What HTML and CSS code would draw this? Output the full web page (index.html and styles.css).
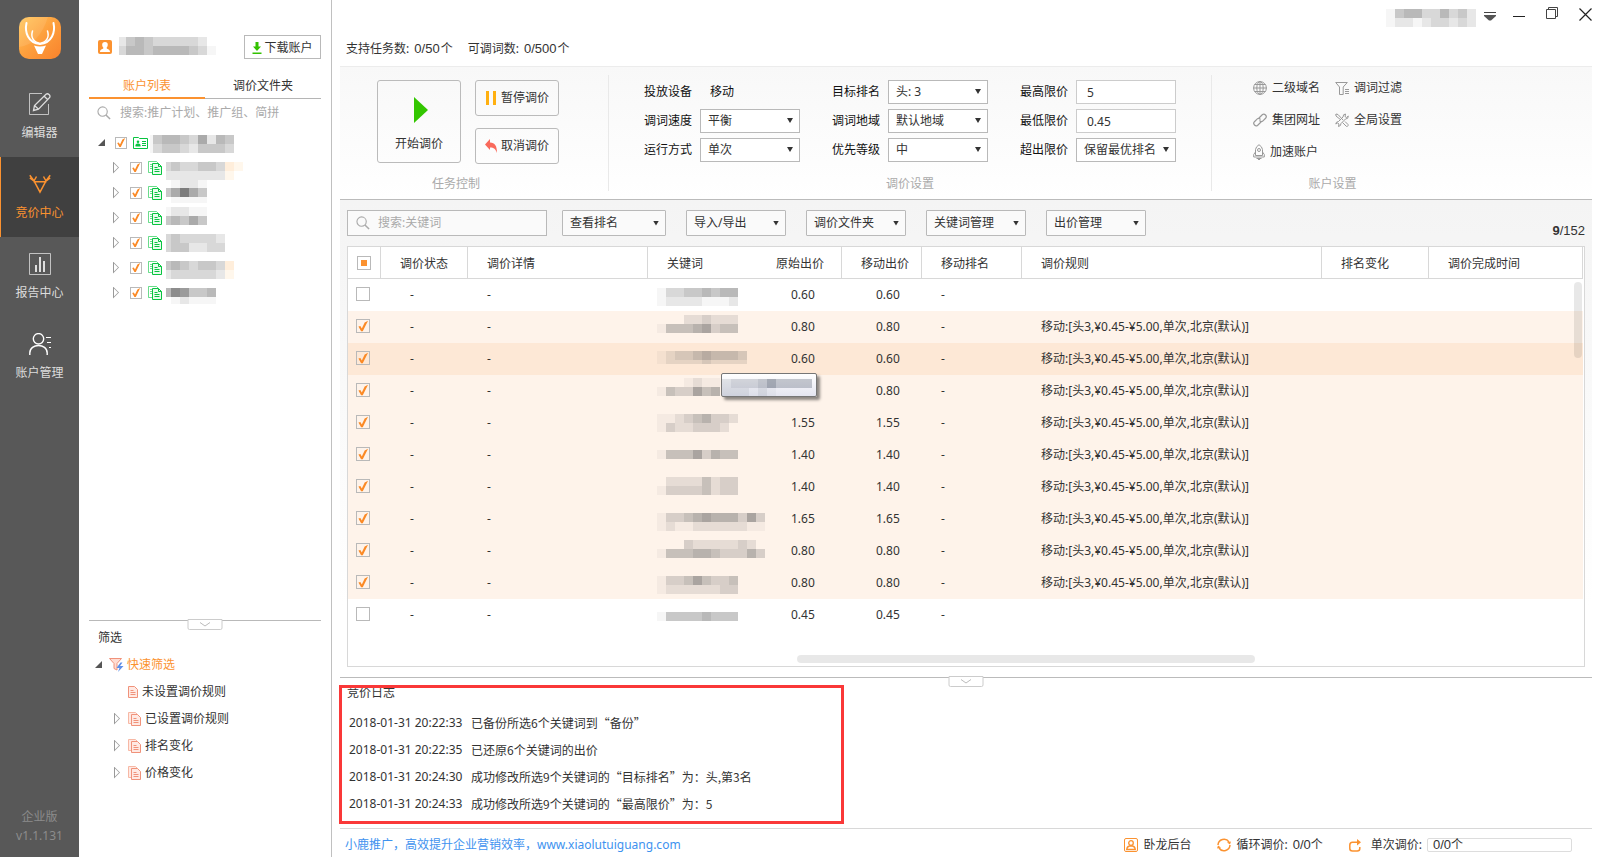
FILE: index.html
```html
<!DOCTYPE html>
<html lang="zh-CN">
<head>
<meta charset="utf-8">
<title>小鹿推广 - 竞价中心</title>
<link rel="stylesheet" href="styles.css">
</head>
<body>
<svg class="defs" aria-hidden="true">
  <symbol id="i-search" viewBox="0 0 15 15"><circle cx="6" cy="6" r="5" fill="none" stroke="currentColor" stroke-width="1.2"/><path d="M9.6 9.6 14 14" stroke="currentColor" stroke-width="1.6"/></symbol>
  <symbol id="i-docs" viewBox="0 0 15 14"><path d="M4 11.500H.5V.5h8l1.500 1.500" fill="none" stroke="currentColor" opacity=".6"/><path d="M2 3.500h2M2 5.500h2M2 7.500h2" stroke="currentColor" opacity=".6"/><path d="M4.500 2.500h6l3 3v8h-9z" fill="#e9fbee" stroke="currentColor"/><path d="M10.500 2.500v3h3M6.500 6.500h3M6.500 8.500h5M6.500 10.500h5" fill="none" stroke="currentColor"/></symbol>
  <symbol id="i-rules" viewBox="0 0 14 14"><path d="M3 11.500H.5V.5h7l2 2" fill="#ffe9e3" stroke="#f7b8a5"/><path d="M3.500 2.500h6l3 3v8h-9z" fill="#ffe9e3" stroke="#f0927a"/><path d="M5.500 6.500h3M5.500 8.500h5M5.500 10.500h5" stroke="#f0927a"/></symbol>
  <symbol id="i-down" viewBox="0 0 11 6"><path d="M.5.5l5 3.500 5-3.500" fill="none" stroke="#bbb"/></symbol>
</svg>

<div class="app">
  <aside class="rail">
    <svg class="logo" viewBox="0 0 42 42" role="img" aria-label="小鹿推广">
      <defs><linearGradient id="lg" x1="0" y1="0" x2="1" y2="1"><stop offset="0" stop-color="#ffc75a"/><stop offset=".5" stop-color="#fd9f3d"/><stop offset="1" stop-color="#f9822c"/></linearGradient></defs>
      <rect width="42" height="42" rx="10" fill="url(#lg)"/>
      <path d="M0 30Q20 28 29 0H10Q0 0 0 10z" fill="#fff" opacity=".1"/>
      <path d="M7.500 6C5.500 15 9 26 21 27 33 26 36.500 15 34.500 6" fill="none" stroke="#fff" stroke-width="2" stroke-linecap="round"/>
      <path d="M13.500 14C11.500 20 14 25 21 26.500 28 25 30.500 20 28.500 14" fill="none" stroke="#fff" stroke-width="1.500" stroke-linecap="round"/>
      <path d="M15 28.500Q21 30.500 27 28.500L23 37H19z" fill="#fff"/>
    </svg>
    <nav class="rail-nav">
      <a class="rail-item" href="#editor">
        <svg class="rail-icon" viewBox="0 0 22 22" fill="none" stroke="currentColor"><path d="M13 .5H.5v21h19V11" opacity=".8"/><path d="M4.500 17.500l1-5L17 1.200q1.500-1 3 .3t.7 3L9.500 16.200zM15 3l4 4M5.500 12.500l4 3.700" stroke-width="1.300"/></svg>
        编辑器</a>
      <a class="rail-item is-active" href="#bid" aria-current="page">
        <svg class="rail-icon" viewBox="0 0 22 22" fill="none" stroke="currentColor" stroke-width="1.500"><path d="M.8 2.200L5 8l6 11.200L17 8l4.200-5.800M4.500 8.800h13M7.500 3.500L5 8M14.500 3.500L17 8M.8 5l4 2.800M21.200 5l-4 2.800"/></svg>
        竞价中心</a>
      <a class="rail-item" href="#report">
        <svg class="rail-icon" viewBox="0 0 22 22" fill="none" stroke="currentColor"><path d="M.5.5h21v21H.5z" opacity=".8"/><path d="M7 12v7M11 4v15M15 8v11" stroke-width="2"/></svg>
        报告中心</a>
      <a class="rail-item" href="#account">
        <svg class="rail-icon" viewBox="0 0 22 22" fill="none" stroke="#fff"><circle cx="9.500" cy="5.800" r="5.200" stroke-width="1.400"/><path d="M.8 22V20C.8 10 18.200 10 18.200 20v2" stroke-width="1.400"/><path d="M17 4.500h5M18 9.500h4M20 14.500h2"/></svg>
        账户管理</a>
    </nav>
    <p class="version">企业版<br>v1.1.131</p>
  </aside>

  <section class="side">
    <header class="side-head">
      <svg width="14" height="14" viewBox="0 0 14 14"><rect width="14" height="14" rx="2" fill="#fb9230"/><path d="M7 2c4 0 3 4.500 1.500 6 .2 1 3.500 1 3.500 4H2c0-3 3.300-3 3.500-4C4 6.500 3 2 7 2z" fill="#fff"/></svg>
      <svg class="mosaic mosaic-name" width="98" height="20" data-top="0" data-lead="7" data-cells="1343222221|24434444320"></svg>
      <button class="download" type="button"><svg width="10" height="12" viewBox="0 0 10 12"><path d="M3.500 0h3v4.500H9L5 9 1 4.500h2.500zM.5 10.500h9V12h-9z" fill="#33c200"/></svg>下载账户</button>
    </header>
    <div class="tabs" role="tablist">
      <button class="tab is-active" type="button" role="tab" aria-selected="true">账户列表</button>
      <button class="tab" type="button" role="tab" aria-selected="false">调价文件夹</button>
    </div>
    <label class="side-search">
      <svg width="14" height="14"><use href="#i-search"/></svg>
      <input type="search" placeholder="搜索:推广计划、推广组、简拼" aria-label="搜索">
    </label>
    <ul class="tree">
      <li class="node root"><i class="open"></i><input class="check sm" type="checkbox" checked aria-label="账户">
        <svg class="green" width="15" height="12" viewBox="0 0 15 12" fill="none" stroke="currentColor"><path d="M.5 11.500V.5h5l1 1h8v10z"/><circle cx="5" cy="4.800" r="1.300" fill="currentColor" stroke="none"/><path d="M2.500 9.500V8.200C2.500 6 7.500 6 7.500 8.200v1.300z" fill="currentColor" stroke="none"/><path d="M9 4.500h4M9 6.500h4M9 8.500h4"/></svg>
        <svg class="mosaic" width="84" height="25" data-top="5" data-lead="3" data-cells="0344325143|0233213332"></svg></li>
      <li class="node"><i class="closed"></i><input class="check sm" type="checkbox" checked aria-label="推广计划1"><svg class="green" width="15" height="14"><use href="#i-docs"/></svg><svg class="mosaic" width="80" height="25" data-top="7" data-lead="5" data-cells="2322332pq|1111111q"></svg></li>
      <li class="node"><i class="closed"></i><input class="check sm" type="checkbox" checked aria-label="推广计划2"><svg class="green" width="15" height="14"><use href="#i-docs"/></svg><svg class="mosaic" width="80" height="25" data-top="-1" data-lead="5" data-bottom="23" data-cells=" 0110|35853| 0000"></svg></li>
      <li class="node"><i class="closed"></i><input class="check sm" type="checkbox" checked aria-label="推广计划3"><svg class="green" width="15" height="14"><use href="#i-docs"/></svg><svg class="mosaic" width="80" height="25" data-top="2" data-lead="5" data-cells="01100|34353"></svg></li>
      <li class="node"><i class="closed"></i><input class="check sm" type="checkbox" checked aria-label="推广计划4"><svg class="green" width="15" height="14"><use href="#i-docs"/></svg><svg class="mosaic" width="80" height="25" data-top="4" data-lead="5" data-cells="2322221|2331122"></svg></li>
      <li class="node"><i class="closed"></i><input class="check sm" type="checkbox" checked aria-label="推广计划5"><svg class="green" width="15" height="14"><use href="#i-docs"/></svg><svg class="mosaic" width="80" height="25" data-top="6" data-lead="5" data-cells="3432332p|1222221q"></svg></li>
      <li class="node"><i class="closed"></i><input class="check sm" type="checkbox" checked aria-label="推广计划6"><svg class="green" width="15" height="14"><use href="#i-docs"/></svg><svg class="mosaic" width="80" height="25" data-top="8" data-lead="5" data-bottom="24" data-cells="476334| 01000"></svg></li>
    </ul>
    <section class="filter">
      <button class="handle" type="button" aria-label="收起筛选"><svg width="11" height="6"><use href="#i-down"/></svg></button>
      <h2>筛选</h2>
      <ul>
        <li class="f-root"><i class="open"></i><svg width="15" height="14" viewBox="0 0 15 14"><path d="M.5.5h12L8 5.500V12l-3-1.500v-5z" fill="#ffddd3" stroke="#f0927a"/><path d="M11.500 4.500L7.500 10h3L9 14l5.500-6H11l2.500-3.500z" fill="#5c8fe8"/></svg><span>快速筛选</span></li>
        <li class="f-leaf"><svg width="10" height="12" viewBox="0 0 10 12"><path d="M.5.5h6l3 3v8h-9z" fill="#ffe9e3" stroke="#f0927a"/><path d="M2.500 4.500h3M2.500 6.500h5M2.500 8.500h5" stroke="#f0927a"/></svg>未设置调价规则</li>
        <li class="f-item"><i class="closed"></i><svg width="14" height="14"><use href="#i-rules"/></svg>已设置调价规则</li>
        <li class="f-item"><i class="closed"></i><svg width="14" height="14"><use href="#i-rules"/></svg>排名变化</li>
        <li class="f-item"><i class="closed"></i><svg width="14" height="14"><use href="#i-rules"/></svg>价格变化</li>
      </ul>
    </section>
  </section>

  <main class="main">
    <header class="top">
      <p class="quota"><span>支持任务数: <b class="num">0/50</b>个</span><span>可调词数: <b class="num">0/500</b>个</span></p>
      <div class="window">
        <svg class="mosaic" width="90" height="20" data-top="2" data-cells="0344224231|0110122121"></svg>
        <button type="button" aria-label="菜单"><svg width="12" height="12" viewBox="0 0 12 12"><path d="M0 1.500h12" stroke="#444"/><path d="M0 4h12v1L7 9.500H5L0 5z" fill="#555"/></svg></button>
        <button type="button" aria-label="最小化"><svg width="12" height="12" viewBox="0 0 12 12"><path d="M0 5.500h12" stroke="#222"/></svg></button>
        <button type="button" aria-label="还原"><svg width="12" height="20" viewBox="0 0 12 20"><path d="M.5 2.500h9v9h-9zM2.500 2.500v-2h9v9h-2" fill="none" stroke="#444"/></svg></button>
        <button type="button" aria-label="关闭"><svg width="13" height="18" viewBox="0 0 13 18"><path d="M.5.500l12 12M12.500.500l-12 12" stroke="#222" stroke-width="1.200"/></svg></button>
      </div>
    </header>

    <section class="ribbon">
      <div class="group group-task">
        <div class="task">
          <button class="start" type="button"><svg width="18" height="26" viewBox="-4 0 18 26"><path d="M0 0l14 13L0 26z" fill="#33c600"/></svg>开始调价</button>
          <div class="task-side">
            <button type="button"><svg width="12" height="14" viewBox="0 0 12 14"><path d="M1 0h3v14H1zM8 0h3v14H8z" fill="#ffb010"/></svg>暂停调价</button>
            <button type="button"><svg width="12" height="14" viewBox="0 0 12 14"><path d="M0 5.500L5 0v3.500C10 3.500 12 7 12 14 10.500 10 9 8.500 5 8.500V11z" fill="#f96a5c"/></svg>取消调价</button>
          </div>
        </div>
        <h3>任务控制</h3>
      </div>
      <div class="group group-price">
        <div class="fields">
          <p class="field"><span>投放设备</span><span class="fixed">移动</span></p>
          <label class="field"><span>目标排名</span><span class="pick"><select><option>头: 3</option></select></span></label>
          <label class="field"><span>最高限价</span><input type="text" value="5"></label>
          <label class="field"><span>调词速度</span><span class="pick"><select><option>平衡</option></select></span></label>
          <label class="field"><span>调词地域</span><span class="pick"><select><option>默认地域</option></select></span></label>
          <label class="field"><span>最低限价</span><input type="text" value="0.45"></label>
          <label class="field"><span>运行方式</span><span class="pick"><select><option>单次</option></select></span></label>
          <label class="field"><span>优先等级</span><span class="pick"><select><option>中</option></select></span></label>
          <label class="field"><span>超出限价</span><span class="pick"><select><option>保留最优排名</option></select></span></label>
        </div>
        <h3>调价设置</h3>
      </div>
      <div class="group group-account">
        <div class="links">
          <button type="button"><svg width="14" height="14" viewBox="0 0 14 14" fill="none" stroke="#999"><circle cx="7" cy="7" r="6.400"/><ellipse cx="7" cy="7" rx="3.200" ry="6.400"/><path d="M7 .5v13M.5 7h13M1.500 3.500h11M1.500 10.500h11"/></svg>二级域名</button>
          <button type="button"><svg width="14" height="14" viewBox="0 0 14 14" fill="none" stroke="#999"><path d="M.7 1.500h11.600L8.200 6v7.500H4.500V6zM10 8.500h4M10 10.500h4M10 12.500h4"/></svg>调词过滤</button>
          <button type="button"><svg width="14" height="14" viewBox="0 0 14 14" fill="none" stroke="#999" stroke-width="1.200"><path d="M6 5l3.500-3.500q1.500-1 3 .5t.3 3L9.500 8.300Q8 9 6.500 7.500M8 9l-3.500 3.500q-1.500 1-3-.5t-.3-3L4.500 5.700Q6 5 7.500 6.500"/></svg>集团网址</button>
          <button type="button"><svg width="14" height="14" viewBox="0 0 14 14" fill="none" stroke="#999"><path d="M1 1l2 .5L8 7M10 8.500l3 3q.5 1-.5 1.800-1 .5-1.500-.3L7.500 9.500M13.300 3L11.500 4.500 10 3.500 10.500 1Q8 1 8 4L3.500 8.500Q.8 8.800.8 11l1.700-1 1.500 1-.5 2.500Q6 13 6 10.500L10.500 6Q13.500 6 13.300 3zM.8 1L1 3l5 4"/></svg>全局设置</button>
          <button class="tight" type="button"><svg width="12" height="16" viewBox="0 0 12 16" fill="none" stroke="#999"><path d="M2.500 11.500V5.500Q3 2.500 6 .7 9 2.500 9.500 5.500v6zM2.500 8L.7 10.500V13h10.600V10.500L9.500 8"/><circle cx="6" cy="6" r="1.500"/><path d="M3.500 14.500h5M5 15.500h2"/></svg>加速账户</button>
        </div>
        <h3>账户设置</h3>
      </div>
    </section>

    <section class="work">
      <div class="bar">
        <label class="search"><svg width="14" height="14"><use href="#i-search"/></svg><input type="search" placeholder="搜索:关键词" aria-label="搜索关键词"></label>
        <div class="menus">
          <button class="menu wide" type="button">查看排名</button>
          <button class="menu" type="button">导入/导出</button>
          <button class="menu" type="button">调价文件夹</button>
          <button class="menu" type="button">关键词管理</button>
          <button class="menu" type="button">出价管理</button>
        </div>
        <p class="count"><b>9</b>/152</p>
      </div>
      <div class="sheet">
        <table>
          <colgroup><col class="w-check"><col class="w-state"><col class="w-detail"><col class="w-word"><col class="w-orig"><col class="w-mobile"><col class="w-rank"><col class="w-rule"><col class="w-change"><col></colgroup>
          <thead>
            <tr><th><input class="check some" type="checkbox" aria-label="全选"></th><th>调价状态</th><th>调价详情</th><th class="open-end">关键词</th><th>原始出价</th><th>移动出价</th><th>移动排名</th><th>调价规则</th><th>排名变化</th><th>调价完成时间</th></tr>
          </thead>
          <tbody>
            <tr><td><input class="check" type="checkbox" aria-label="选择"></td><td>-</td><td>-</td><td><svg class="mosaic" width="109" height="32" data-top="9" data-cells="022334344|011110001"></svg></td><td>0.60</td><td>0.60</td><td>-</td><td></td><td></td><td></td></tr>
            <tr class="on"><td><input class="check" type="checkbox" checked aria-label="选择"></td><td>-</td><td>-</td><td><svg class="mosaic" width="109" height="32" data-top="4" data-cells="   112111|033345233"></svg></td><td>0.80</td><td>0.80</td><td>-</td><td>移动:[头3,¥0.45-¥5.00,单次,北京(默认)]</td><td></td><td></td></tr>
            <tr class="on hover"><td><input class="check" type="checkbox" checked aria-label="选择"></td><td>-</td><td>-</td><td><svg class="mosaic" width="109" height="32" data-top="8" data-bottom="21" data-cells="0122343332|0111121111"></svg></td><td>0.60</td><td>0.60</td><td>-</td><td>移动:[头3,¥0.45-¥5.00,单次,北京(默认)]</td><td></td><td></td></tr>
            <tr class="on"><td><input class="check" type="checkbox" checked aria-label="选择"></td><td>-</td><td>-</td><td><svg class="mosaic" width="109" height="32" data-top="3" data-cells="   0100|0322534"></svg></td><td></td><td>0.80</td><td>-</td><td>移动:[头3,¥0.45-¥5.00,单次,北京(默认)]</td><td></td><td></td></tr>
            <tr class="on"><td><input class="check" type="checkbox" checked aria-label="选择"></td><td>-</td><td>-</td><td><svg class="mosaic" width="109" height="32" data-top="7" data-cells="001234221|02112221"></svg></td><td>1.55</td><td>1.55</td><td>-</td><td>移动:[头3,¥0.45-¥5.00,单次,北京(默认)]</td><td></td><td></td></tr>
            <tr class="on"><td><input class="check" type="checkbox" checked aria-label="选择"></td><td>-</td><td>-</td><td><svg class="mosaic" width="109" height="32" data-top="11" data-cells="033352433"></svg></td><td>1.40</td><td>1.40</td><td>-</td><td>移动:[头3,¥0.45-¥5.00,单次,北京(默认)]</td><td></td><td></td></tr>
            <tr class="on"><td><input class="check" type="checkbox" checked aria-label="选择"></td><td>-</td><td>-</td><td><svg class="mosaic" width="109" height="32" data-top="6" data-cells=" 11113122|022223122"></svg></td><td>1.40</td><td>1.40</td><td>-</td><td>移动:[头3,¥0.45-¥5.00,单次,北京(默认)]</td><td></td><td></td></tr>
            <tr class="on"><td><input class="check" type="checkbox" checked aria-label="选择"></td><td>-</td><td>-</td><td><svg class="mosaic" width="109" height="32" data-top="10" data-cells="022345444252|010011111100"></svg></td><td>1.65</td><td>1.65</td><td>-</td><td>移动:[头3,¥0.45-¥5.00,单次,北京(默认)]</td><td></td><td></td></tr>
            <tr class="on"><td><input class="check" type="checkbox" checked aria-label="选择"></td><td>-</td><td>-</td><td><svg class="mosaic" width="109" height="32" data-top="5" data-cells="   21111121|033344322242"></svg></td><td>0.80</td><td>0.80</td><td>-</td><td>移动:[头3,¥0.45-¥5.00,单次,北京(默认)]</td><td></td><td></td></tr>
            <tr class="on"><td><input class="check" type="checkbox" checked aria-label="选择"></td><td>-</td><td>-</td><td><svg class="mosaic" width="109" height="32" data-top="9" data-cells="022353223|011111122"></svg></td><td>0.80</td><td>0.80</td><td>-</td><td>移动:[头3,¥0.45-¥5.00,单次,北京(默认)]</td><td></td><td></td></tr>
            <tr><td><input class="check" type="checkbox" aria-label="选择"></td><td>-</td><td>-</td><td><svg class="mosaic" width="109" height="32" data-top="13" data-cells="033334333"></svg></td><td>0.45</td><td>0.45</td><td>-</td><td></td><td></td><td></td></tr>
          </tbody>
        </table>
        <div class="tip"><svg class="mosaic cool" width="90" height="24" data-top="5" data-cells="1222353333|111010"></svg></div>
        <div class="thumb-y"></div>
        <div class="thumb-x"></div>
      </div>
    </section>

    <section class="log">
      <button class="handle" type="button" aria-label="收起日志"><svg width="11" height="6"><use href="#i-down"/></svg></button>
      <h2>竞价日志</h2>
      <ol>
        <li><time>2018-01-31 20:22:33</time><span>已备份所选6个关键词到“备份”</span></li>
        <li><time>2018-01-31 20:22:35</time><span>已还原6个关键词的出价</span></li>
        <li><time>2018-01-31 20:24:30</time><span>成功修改所选9个关键词的“目标排名”为：头,第3名</span></li>
        <li><time>2018-01-31 20:24:33</time><span>成功修改所选9个关键词的“最高限价”为：5</span></li>
      </ol>
      <div class="callout"></div>
    </section>

    <footer class="foot">
      <a href="#home">小鹿推广，高效提升企业营销效率，www.xiaolutuiguang.com</a>
      <button class="admin" type="button"><svg width="14" height="14" viewBox="0 0 14 14" fill="none" stroke="#fb9230"><rect x=".5" y=".5" width="13" height="13" rx="1.500"/><circle cx="7" cy="5" r="2.300" stroke-width="1.300"/><path d="M2.700 11.500Q3 8.500 5.500 8h3q2.500.5 2.800 3.500z" stroke-width="1.300"/></svg>卧龙后台</button>
      <p class="loop"><svg width="14" height="14" viewBox="0 0 14 14" fill="none" stroke="#fb9230" stroke-width="1.500"><path d="M1 7A6 6 0 0 1 12 4M13 7A6 6 0 0 1 2 10"/><path d="M14 3.500l-1 3-3-2zM0 10.500l1-3 3 2z" fill="#fb9230" stroke="none"/></svg>循环调价: <span><b class="num">0/0</b>个</span></p>
      <p class="once"><svg width="12" height="13" viewBox="0 0 12 13" fill="none" stroke="#fb9230" stroke-width="1.500"><path d="M9 3.200H3.500Q.8 3.200.8 6v3.500q0 2.500 2.700 2.500h4.800q2.500 0 2.500-2.500V8"/><path d="M8 0l4 3.200L8 6.500z" fill="#fb9230" stroke="none"/></svg>单次调价: <span class="progress"><b class="num">0/0</b>个</span></p>
    </footer>
  </main>
</div>
<script src="script.js"></script>
</body>
</html>
```
FILE: styles.css
```css
* { box-sizing: border-box; }
body { margin: 0; background: #fff; color: #333; font: 12px/16px "Noto Sans", "Noto Sans CJK SC", sans-serif; }
h2, h3, p, ul, ol { margin: 0; padding: 0; font-size: 12px; font-weight: 400; list-style: none; }
button, input, select { font: inherit; color: inherit; margin: 0; }
button { background: none; border: 0; padding: 0; white-space: nowrap; }
input:focus { outline: none; }
input::placeholder { color: #aaa; opacity: 1; }
a { color: inherit; text-decoration: none; }
svg { display: block; flex: none; }
.defs { position: absolute; width: 0; height: 0; }
.num { font: 13px/16px "Liberation Sans", sans-serif; }
.green { color: #08c440; }

.app { display: grid; grid-template-columns: 79px 253px minmax(0, 1fr); min-height: 100vh; }

/* navigation rail */
.rail { background: #585858; color: #ddd; display: flex; flex-direction: column; align-items: center; padding: 17px 0 12px; }
.logo { width: 42px; height: 42px; }
.rail-nav { width: 100%; margin-top: 18px; }
.rail-item { display: flex; flex-direction: column; align-items: center; gap: 10px; height: 80px; padding-top: 16px; }
.rail-item.is-active { background: #404040; color: #fb9230; box-shadow: inset 1px 0 #fb9230; }
.rail-icon { width: 22px; height: 22px; }
.version { margin-top: auto; color: #8c8c8c; text-align: center; line-height: 19px; }

/* account panel */
.side { display: flex; flex-direction: column; padding: 35px 10px 0; border-right: 1px solid #c0c0c0; }
.side-head { display: flex; align-items: center; height: 24px; padding-left: 9px; }
.mosaic-name { margin: 0 auto 0 7px; }
.download { display: flex; align-items: center; justify-content: center; gap: 2px; width: 77px; height: 24px; padding-top: 1px; border: 1px solid #b9b9b9; }
.tabs { display: grid; grid-template-columns: 1fr 1fr; margin-top: 13px; height: 27px; }
.tab { padding-top: 2px; border-bottom: 1px solid #b5b5b5; }
.tab.is-active { color: #fb9230; border-bottom: 2px solid #fb9230; }
.side-search { display: flex; align-items: center; gap: 9px; height: 27px; padding-left: 8px; color: #aaa; }
.side-search input { flex: 1; min-width: 0; border: 0; padding: 0; background: none; }
.tree { margin-top: 4px; }
.node { display: flex; align-items: center; height: 25px; padding-left: 24px; }
.node.root { padding-left: 9px; }
.open { width: 7px; height: 7px; background: #555; clip-path: polygon(100% 0, 100% 100%, 0 100%); }
.closed { width: 6px; height: 12px; background: #999; clip-path: polygon(0 0, 100% 50%, 0 100%, 0 0, 1px 2px, 1px 10px, 5px 50%, 1px 2px); }
.node .check { margin: 0 6px 0 11px; }
.node.root .check { margin-left: 10px; }
.node .mosaic { margin-left: 3px; }
.node.root .mosaic { margin-left: 2px; }

.check { appearance: none; display: block; position: relative; flex: none; width: 14px; height: 14px; border: 1px solid #b9b9b9; background: transparent; }
.check.sm { width: 12px; height: 12px; }
.check:checked::before { content: ""; display: block; width: 100%; height: 100%; background: #fb8a26; clip-path: polygon(12% 54%, 28% 50%, 40% 70%, 64% 20%, 92% 6%, 48% 94%, 34% 94%); }
.check.some::before { content: ""; display: block; width: 6px; height: 6px; margin: 3px; background: #fb9230; }

.filter { position: relative; margin-top: auto; height: 237px; border-top: 1px solid #b9b9b9; padding-top: 8px; }
.filter h2 { padding-left: 9px; line-height: 18px; margin-bottom: 4px; }
.filter li { display: flex; align-items: center; height: 27px; }
.f-root { padding-left: 6px; gap: 3px; color: #fb9230; }
.f-root .open { margin-right: 4px; }
.f-leaf { padding-left: 39px; gap: 4px; }
.f-item { padding-left: 25px; gap: 3px; }
.f-item .closed { margin-right: 5px; }
.handle { position: absolute; top: -2px; left: 50%; transform: translateX(-50%); display: flex; align-items: center; justify-content: center; width: 35px; height: 11px; background: #fff; border: 1px solid #ccc; border-radius: 0 0 2px 2px; }

/* main column */
.main { display: flex; flex-direction: column; min-width: 0; padding: 0 8px; }
.top { display: flex; justify-content: space-between; height: 66px; }
.quota { display: flex; gap: 15px; padding: 41px 0 0 6px; }
.quota .num { margin: 0 1px 0 2px; }
.window { display: flex; align-items: center; height: 20px; margin-top: 7px; gap: 21px; }
.window .mosaic { margin-right: -13px; }
.window button:nth-of-type(1) { margin-right: -4px; }
.window button { display: flex; align-items: center; }

.ribbon { display: flex; height: 134px; padding: 8px 0; border-top: 1px solid #ececec; border-bottom: 1px solid #bbb; background: linear-gradient(#f8f8f8, #fff); }
.group { display: flex; flex-direction: column; justify-content: space-between; flex: none; padding-top: 5px; }
.group + .group { border-left: 1px solid #e9e9e9; }
.group h3 { color: #aaa; line-height: 14px; text-align: center; }
.group-task { width: 268px; }
.group-task h3 { padding-right: 36px; }
.group-price { width: 603px; }
.group-account { width: 242px; }
.task { display: flex; gap: 14px; padding-left: 37px; }
.task button { display: flex; align-items: center; justify-content: center; border: 1px solid #bbb; border-radius: 3px; width: 84px; }
.task .start { flex-direction: column; gap: 13px; height: 83px; padding-top: 5px; }
.task-side { display: flex; flex-direction: column; gap: 12px; }
.task-side button { height: 36px; gap: 4px; }
.fields { display: grid; grid-template-columns: repeat(3, 156px); column-gap: 32px; row-gap: 5px; padding-left: 35px; color: #111; }
.field { display: grid; grid-template-columns: 56px 100px; align-items: center; height: 24px; }
.fixed { padding-left: 10px; }
.field input, .field select { width: 100px; height: 24px; border: 1px solid #b9b9b9; border-radius: 0; background: #fff; color: #333; }
.field input { padding: 0 10px; border-color: #ccc; }
.field select { appearance: none; padding: 0 7px; }
.pick { position: relative; display: block; }
.pick::after, .menu::after { content: ""; width: 6px; height: 5px; background: #333; clip-path: polygon(0 0, 100% 0, 50% 100%); }
.pick::after { position: absolute; right: 7px; top: 9px; pointer-events: none; }
.links { display: grid; grid-template-columns: 82px 82px; row-gap: 16px; padding-left: 41px; }
.links button { display: flex; align-items: center; gap: 5px; height: 16px; }

.work { flex: 1; display: flex; flex-direction: column; gap: 10px; padding: 10px 7px; background: linear-gradient(#f4f4f4, #fff 85%); }
.bar { display: flex; height: 26px; }
.search { display: flex; align-items: center; gap: 8px; width: 200px; margin-right: 15px; padding-left: 8px; border: 1px solid #b9b9b9; background: #fafafa; color: #aaa; }
.search input { flex: 1; min-width: 0; padding: 0; border: 0; background: none; }
.menus { display: flex; gap: 20px; }
.menu { display: flex; align-items: center; justify-content: space-between; width: 100px; padding: 0 6px 0 7px; border: 1px solid #b9b9b9; border-radius: 1px; background: #fafafa; }
.menu.wide { width: 104px; }
.count { align-self: flex-end; margin-left: auto; font: 13px/10px "Liberation Sans", sans-serif; }

.sheet { position: relative; flex: 1; padding-right: 1px; border: 1px solid #d8d8d8; background: #fff; }
table { width: 100%; table-layout: fixed; border-collapse: separate; border-spacing: 0; }
.w-check { width: 33px; }
.w-state { width: 87px; }
.w-detail { width: 180px; }
.w-word { width: 109px; }
.w-orig { width: 85px; }
.w-mobile { width: 80px; }
.w-rank { width: 100px; }
.w-rule { width: 300px; }
.w-change { width: 107px; }
th, td { height: 32px; padding: 0 0 0 19px; text-align: left; font-weight: 400; white-space: nowrap; }
th { padding-top: 2px; border-right: 1px solid #d8d8d8; border-bottom: 1px solid #d8d8d8; }
th.open-end { border-right: 0; }
th:first-child { padding: 0 0 0 9px; }
td:first-child { padding: 0 0 2px 8px; }
td:nth-child(2) { padding-left: 29px; }
td:nth-child(4) { padding-left: 9px; }
td:nth-child(5), td:nth-child(6) { padding-left: 34px; }
td .mosaic { width: 100%; overflow: visible; }
.on { background: #fef3ea; }
.hover { background: #fde8d6; }
.tip { position: absolute; left: 373px; top: 126px; width: 96px; height: 24px; border: 1px solid #767676; border-radius: 2px; background: linear-gradient(#fff, #e4e5f0); box-shadow: 3px 3px 3px rgba(0, 0, 0, .45); }
.tip .mosaic { width: 90px; height: 22px; }
.thumb-y, .thumb-x { position: absolute; border-radius: 4px; background: rgba(0, 0, 0, .09); }
.thumb-y { right: 2px; top: 35px; width: 8px; height: 76px; }
.thumb-x { left: 449px; bottom: 3px; width: 458px; height: 8px; }

.log { position: relative; height: 151px; padding-top: 6px; border-top: 1px solid #bbb; }
.log h2 { padding-left: 7px; line-height: 18px; }
.log ol { margin-top: 7px; padding-left: 9px; }
.log li { display: flex; align-items: center; height: 27px; }
.log time { width: 122px; }
.log span { font-family: "Noto Sans CJK SC", sans-serif; }
.callout { position: absolute; left: -1px; top: 7px; width: 505px; height: 139px; border: 3px solid #fa3838; pointer-events: none; }

.foot { display: flex; align-items: center; height: 29px; padding: 4px 20px 0 5px; border-top: 1px solid #d8d8d8; }
.foot a { margin-right: auto; color: #3e92ef; }
.foot p, .admin { display: flex; align-items: center; gap: 5px; }
.admin, .loop { margin-right: 26px; }
.once svg { margin-right: 5px; }
.progress { width: 145px; height: 14px; padding-left: 5px; border: 1px solid #ddd; border-radius: 2px; line-height: 12px; }
.progress .num { line-height: 12px; }
```
FILE: script.js
```js
// Fills each masked name with 9px squares; digits set the shade, p and q are warm tints.
const SIZE = 9;
const TINTS = { p: "#ffeedb", q: "#fff7ec" };
const NS = "http://www.w3.org/2000/svg";

document.querySelectorAll(".mosaic").forEach((svg) => {
  const top = Number(svg.dataset.top);
  const bottom = Number(svg.dataset.bottom || 99);
  const lead = Number(svg.dataset.lead || SIZE);
  const base = svg.classList.contains("cool") ? "#505a6c" : "#555";
  svg.dataset.cells.split("|").forEach((line, row) => {
    const y = top + row * SIZE;
    [...line].forEach((cell, col) => {
      if (cell === " ") return;
      const rect = document.createElementNS(NS, "rect");
      rect.setAttribute("x", col ? lead + (col - 1) * SIZE : 0);
      rect.setAttribute("y", y);
      rect.setAttribute("width", col ? SIZE : lead);
      rect.setAttribute("height", Math.min(SIZE, bottom - y));
      rect.setAttribute("fill", TINTS[cell] || base);
      if (!TINTS[cell]) rect.setAttribute("fill-opacity", 0.05 + Number(cell) * 0.09);
      svg.append(rect);
    });
  });
});
```
